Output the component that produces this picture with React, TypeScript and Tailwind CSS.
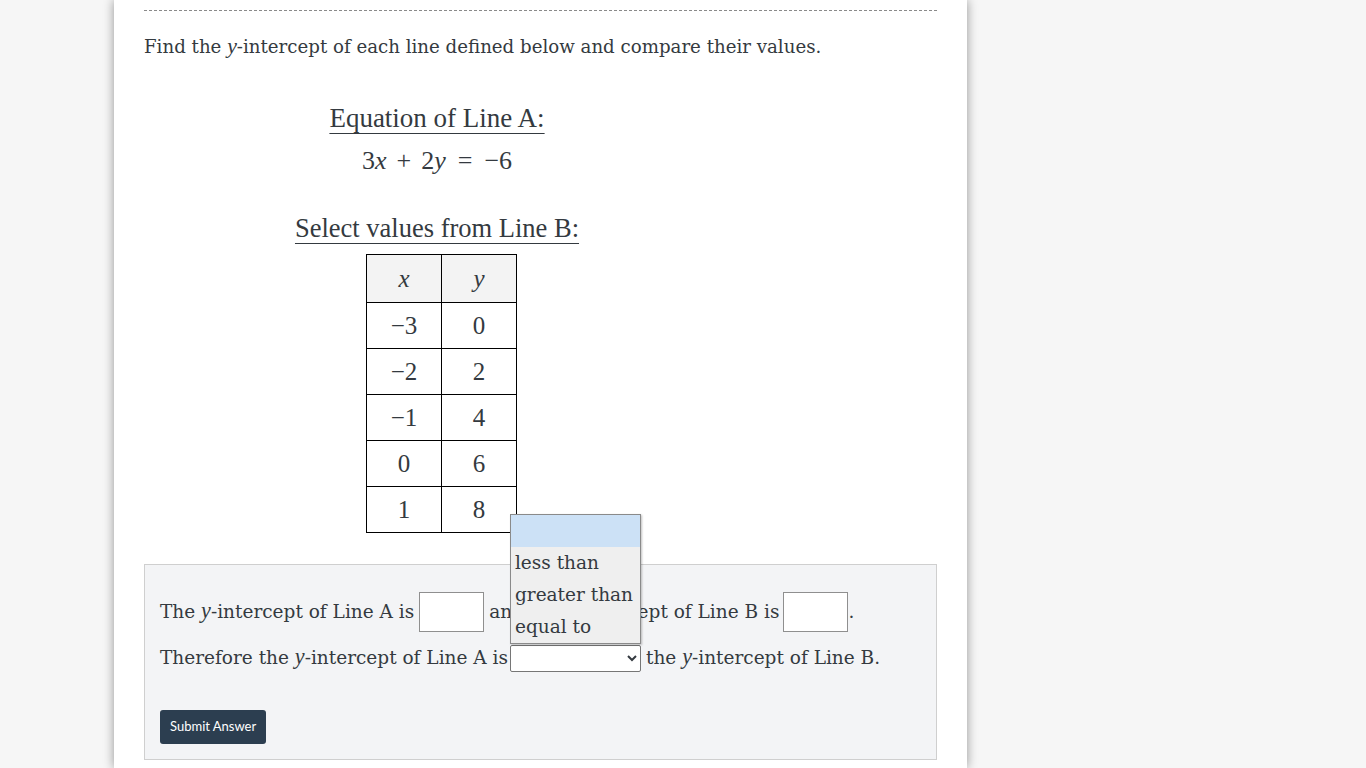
import { useState } from "react";

const body = "font-['DejaVu_Serif',serif]";
const math = "font-['Liberation_Serif','Times_New_Roman',serif]";

function V({ children }: { children: string }) {
  return <span className={`${math} italic text-[1.2em] leading-none`}>{children}</span>;
}

const rows: [string, string][] = [
  ["−3", "0"],
  ["−2", "2"],
  ["−1", "4"],
  ["0", "6"],
  ["1", "8"],
];

const options = ["", "less than", "greater than", "equal to"];

export default function App() {
  const [a, setA] = useState("");
  const [b, setB] = useState("");
  const [cmp, setCmp] = useState("");

  return (
    <div className="min-h-screen bg-[#f6f6f6] text-[#343a40]">
      <div className={`${body} ml-[114px] min-h-screen w-[853px] bg-white px-[30px] shadow-[0_0_10px_rgba(0,0,0,0.4)]`}>
        <div className="pt-[10px]">
          <div className="border-t border-dashed border-[#8a8a8a]" />
        </div>

        <p className="mt-[21px] flex h-[30px] items-center text-[18.2px]">
          <span>
            Find the <V>y</V>-intercept of each line defined below and compare their values.
          </span>
        </p>

        <div className={`${math} w-[586px] text-center`}>
          <div className="mt-[38px] h-[36px] text-[27px] leading-[36px]">
            <span className="underline decoration-1 underline-offset-[6px]">Equation of Line A:</span>
          </div>
          <div className="mt-[7px] h-[36px] text-[26px] leading-[36px]">
            3<i>x</i>
            <span className="mx-[10px]">+</span>2<i>y</i>
            <span className="mx-[12px]">=</span>−6
          </div>
          <div className="mt-[31px] h-[36px] text-[26.5px] leading-[36px]">
            <span className="underline decoration-1 underline-offset-[6px]">Select values from Line B:</span>
          </div>
        </div>

        <table className={`${math} ml-[222px] mt-[8px] border-collapse text-[25px]`}>
          <thead>
            <tr className="h-[48px] bg-[#f3f3f3]">
              <th className="w-[75px] border border-black font-normal italic">x</th>
              <th className="w-[75px] border border-black font-normal italic">y</th>
            </tr>
          </thead>
          <tbody>
            {rows.map(([x, y]) => (
              <tr key={x} className="h-[46px]">
                <td className="border border-black text-center">{x}</td>
                <td className="border border-black text-center">{y}</td>
              </tr>
            ))}
          </tbody>
        </table>

        <div className="mt-[31px] border border-[#cfcfcf] bg-[#f3f4f6] px-[15px] pb-[15px] pt-[27px] text-[18.5px]">
          <div className="flex h-[40px] items-center">
            <span>
              The <V>y</V>-intercept of Line A is
            </span>
            <input
              value={a}
              onChange={(e) => setA(e.target.value)}
              className="ml-[5px] h-[40px] w-[65px] border border-[#8f8f8f] bg-white px-1"
            />
            <span className="ml-[5px]">
              and the <V>y</V>-intercept of Line B is
            </span>
            <input
              value={b}
              onChange={(e) => setB(e.target.value)}
              className="ml-[4px] h-[40px] w-[65px] border border-[#8f8f8f] bg-white px-1"
            />
            <span>.</span>
          </div>

          <div className="mt-[8px] flex h-[36px] items-center">
            <span>
              Therefore the <V>y</V>-intercept of Line A is
            </span>
            <div className="relative ml-[2px]">
              <select
                value={cmp}
                onChange={(e) => setCmp(e.target.value)}
                className="block h-[27px] w-[131px] rounded-[2px] border border-[#767676] bg-white text-[14px]"
              >
                {options.map((o) => (
                  <option key={o} value={o}>
                    {o}
                  </option>
                ))}
              </select>
              <ul className="absolute bottom-full left-0 mb-px w-[131px] border border-[#8a8a8a] bg-[#efefef] text-[18.5px] shadow-[1px_1px_2px_rgba(0,0,0,0.25)]">
                {options.map((o, i) => (
                  <li
                    key={o}
                    onClick={() => setCmp(o)}
                    className={`flex h-[32px] items-center px-[4px] ${i === 0 ? "bg-[#cce1f6]" : ""}`}
                  >
                    {o}
                  </li>
                ))}
              </ul>
            </div>
            <span className="ml-[5px]">
              the <V>y</V>-intercept of Line B.
            </span>
          </div>

          <button className="mt-[34px] h-[34px] rounded-[3px] bg-[#2c3e50] px-[10px] font-['Lato',sans-serif] text-[13px] text-white">
            Submit Answer
          </button>
        </div>
      </div>
    </div>
  );
}
